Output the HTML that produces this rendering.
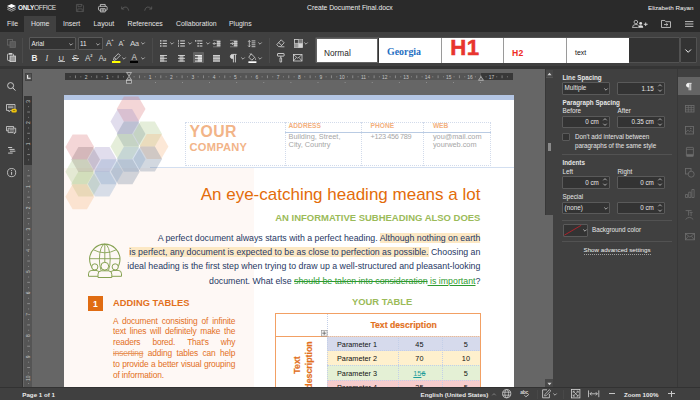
<!DOCTYPE html>
<html>
<head>
<meta charset="utf-8">
<title>Create Document Final.docx</title>
<style>
*{box-sizing:border-box;margin:0;padding:0}
html,body{width:700px;height:400px;overflow:hidden;background:#404040}
body{font-family:"Liberation Sans",sans-serif;font-size:6.3px;color:#d8d8d8;position:relative;line-height:1}
.a{position:absolute}
.t{position:absolute;white-space:nowrap;line-height:1}
svg{position:absolute;overflow:visible}
/* chrome */
#hdr{left:0;top:0;width:700px;height:31.8px;background:#2a2a2a}
#hometab{left:24.2px;top:16px;width:31.8px;height:16px;background:#404040}
.tab{font-size:6.9px;color:#e4e4e4;top:20.9px}
#tb{left:0;top:31.8px;width:700px;height:35px;background:#404040}
#tbline{left:0;top:66px;width:700px;height:3.4px;background:#353535}
.sep{width:1px;background:#4b4b4b;top:38px;height:25px}
.combo{background:#333;border:1px solid #595959;border-radius:1px}
#lsb{left:0;top:69px;width:22px;height:318px;background:#404040}
#lsbline{left:22px;top:69px;width:1px;height:318px;background:#333}
#canvas{left:23px;top:69px;width:522px;height:318px;background:#666}
#status{left:0;top:386.5px;width:700px;height:13.5px;background:#404040;border-top:1.2px solid #323232}
#rpanel{left:553px;top:69px;width:124px;height:318px;background:#404040}
#rbar{left:677px;top:69px;width:23px;height:318px;background:#404040;border-left:1px solid #383838}
#vscroll{left:545px;top:69px;width:8px;height:318px;background:#666}
.lbl{font-size:6.3px;color:#e6e6e6}
.lblb{font-size:6.3px;color:#e6e6e6;font-weight:bold}
.inp{background:#333;border:1px solid #5a5a5a;border-radius:1px;height:12.5px}
.hr{height:1px;background:#525252;left:562px;width:110px}
/* page */
#page{left:64px;top:95px;width:449.5px;height:291.5px;background:#fff;overflow:hidden}
</style>
</head>
<body>
<!-- header -->
<div class="a" id="hdr"></div>
<div class="a" id="hometab"></div>

<!-- title bar -->
<svg style="left:7px;top:4px" width="9" height="8" viewBox="0 0 9 8"><path d="M4.5 0 L9 2 L4.5 4 L0 2Z" fill="#fff"/><path d="M0.3 3.6 L4.5 5.5 L8.7 3.6" fill="none" stroke="#d0d0d0" stroke-width="0.9"/><path d="M0.3 5.3 L4.5 7.2 L8.7 5.3" fill="none" stroke="#a8a8a8" stroke-width="0.9"/></svg>
<div class="t" style="left:18px;top:4.6px;font-size:6.5px;font-weight:bold;color:#f2f2f2;letter-spacing:-0.35px">ONLY<span style="font-weight:normal;color:#e0e0e0">OFFICE</span></div>
<!-- save (dim) -->
<svg style="left:76.1px;top:3.6px" width="8" height="8" viewBox="0 0 9 9"><path d="M0.5 0.5 H6.8 L8.5 2.2 V8.5 H0.5Z M2.2 0.5 V3 H6 V0.5 M2 8.5 V5.5 H7 V8.5" fill="none" stroke="#5c5c5c" stroke-width="0.8"/></svg>
<!-- print -->
<svg style="left:98px;top:3.6px" width="9.6" height="8.4" viewBox="0 0 10 9" preserveAspectRatio="none"><path d="M2.5 2.5 V0.5 H7.5 V2.5 M2.5 6.8 H1.6 Q0.5 6.8 0.5 5.7 V3.6 Q0.5 2.5 1.6 2.5 H8.4 Q9.5 2.5 9.5 3.6 V5.7 Q9.5 6.8 8.4 6.8 H7.5 M2.5 5 H7.5 V8.5 H2.5Z M3.6 6.3 H6.4 M3.6 7.4 H6.4" fill="none" stroke="#dcdcdc" stroke-width="0.8"/></svg>
<!-- undo / redo (dim) -->
<svg style="left:121.2px;top:5.6px" width="8.4" height="5.4" viewBox="0 0 9 6"><path d="M0.6 0.6 V3.4 H3.4 M0.8 3.2 Q3 0.6 5.6 1.2 Q8 2 8.4 5.2" fill="none" stroke="#5e5e5e" stroke-width="0.9"/></svg>
<svg style="left:144px;top:5.6px" width="8.4" height="5.4" viewBox="0 0 9 6"><path d="M8.4 0.6 V3.4 H5.6 M8.2 3.2 Q6 0.6 3.4 1.2 Q1 2 0.6 5.2" fill="none" stroke="#5e5e5e" stroke-width="0.9"/></svg>
<div class="t" style="left:307px;top:4.8px;font-size:6.78px;color:#ececec">Create Document Final.docx</div>
<div class="t" style="left:648px;top:5px;font-size:6.25px;color:#f6f6f6">Elizabeth Rayan</div>
<!-- tabs -->
<div class="t tab" style="left:7px">File</div>
<div class="t tab" style="left:31px">Home</div>
<div class="t tab" style="left:63px">Insert</div>
<div class="t tab" style="left:93.5px">Layout</div>
<div class="t tab" style="left:127.5px">References</div>
<div class="t tab" style="left:176px">Collaboration</div>
<div class="t tab" style="left:229px">Plugins</div>
<!-- share / folder / menu -->
<svg style="left:632.3px;top:19.8px" width="16.4" height="8" viewBox="0 0 17 9" preserveAspectRatio="none"><circle cx="4" cy="2.3" r="1.9" fill="none" stroke="#dcdcdc" stroke-width="0.8"/><path d="M0.5 8.5 Q0.5 5 4 5 Q6 5 6.8 6.2 M0.5 8.4 H6" fill="none" stroke="#dcdcdc" stroke-width="0.8"/><circle cx="9" cy="3.8" r="1.5" fill="#dcdcdc"/><path d="M6.4 8.6 Q6.4 5.8 9 5.8 Q11.6 5.8 11.6 8.6Z" fill="#dcdcdc"/><path d="M12.2 4.8 H16.2 M14.2 2.8 V6.8" stroke="#dcdcdc" stroke-width="1"/></svg>
<svg style="left:661.2px;top:19.8px" width="10" height="8.4" viewBox="0 0 10 9" preserveAspectRatio="none"><path d="M0.5 0.5 H3.8 L4.8 1.8 H9.5 V8 H0.5Z" fill="none" stroke="#dcdcdc" stroke-width="0.8"/><path d="M3 4.9 H6.6 M5.3 3.5 L6.8 4.9 L5.3 6.3" fill="none" stroke="#dcdcdc" stroke-width="0.8"/></svg>
<svg style="left:684.5px;top:21px" width="9" height="7" viewBox="0 0 9 7"><path d="M0 0.6 H8.4 M0 3 H8.4 M0 5.4 H8.4" stroke="#d4d4d4" stroke-width="0.85"/></svg>
<div class="a" id="tb"></div>
<div class="a" id="tbline"></div>
<!-- toolbar -->
<svg style="left:7px;top:39px" width="9" height="9" viewBox="0 0 9 9"><rect x="0.5" y="0.5" width="5" height="5.6" fill="none" stroke="#666" stroke-width="0.8"/><rect x="3" y="2.6" width="5.4" height="5.8" fill="#5a5a5a" stroke="#666" stroke-width="0.8"/></svg>
<svg style="left:7px;top:53px" width="9" height="9" viewBox="0 0 9 9"><rect x="0.5" y="1" width="6" height="6.4" rx="0.6" fill="none" stroke="#d0d0d0" stroke-width="0.8"/><rect x="2" y="0" width="3" height="1.6" fill="#d0d0d0"/><rect x="3" y="3" width="5.5" height="5.6" fill="#9a9a9a" stroke="#d8d8d8" stroke-width="0.8"/></svg>
<div class="a sep" style="left:21.9px"></div>
<div class="a sep" style="left:152px"></div>
<div class="a sep" style="left:269px"></div>
<div class="a combo" style="left:29px;top:37px;width:47px;height:12.5px"></div><div class="t" style="left:31.5px;top:41.2px;font-size:6.3px;color:#ededed">Arial</div>
<svg style="left:69px;top:42.6px" width="4" height="3" viewBox="0 0 4 3"><path d="M0.3 0.5 L2 2.2 L3.7 0.5" fill="none" stroke="#c8c8c8" stroke-width="0.8"/></svg>
<div class="a combo" style="left:77.5px;top:37px;width:25px;height:12.5px"></div><div class="t" style="left:80px;top:41.2px;font-size:6.3px;color:#ededed">11</div>
<svg style="left:96.3px;top:42.6px" width="4" height="3" viewBox="0 0 4 3"><path d="M0.3 0.5 L2 2.2 L3.7 0.5" fill="none" stroke="#c8c8c8" stroke-width="0.8"/></svg>
<div class="t" style="left:106px;top:38.6px;font-size:8.4px;color:#d6d6d6">A<span style="font-size:4px;position:relative;top:-4.2px;left:-0.3px;font-weight:bold">+</span></div>
<div class="t" style="left:118.5px;top:39.8px;font-size:7.2px;color:#d6d6d6">A<span style="font-size:4.5px;position:relative;top:-3.6px;left:-0.2px;font-weight:bold">-</span></div>
<div class="t" style="left:130px;top:39.9px;font-size:8px;color:#d6d6d6;letter-spacing:-0.3px">A<span style="font-size:7.2px">a</span></div>
<svg style="left:141px;top:42px" width="4" height="3" viewBox="0 0 4 3"><path d="M0.3 0.5 L2 2.2 L3.7 0.5" fill="none" stroke="#c8c8c8" stroke-width="0.8"/></svg>
<div class="t" style="left:31.6px;top:54.7px;font-size:8.2px;font-weight:bold;color:#efefef">B</div>
<div class="t" style="left:45.5px;top:54.7px;font-size:8.2px;font-style:italic;font-family:'Liberation Serif',serif;color:#d6d6d6">I</div>
<div class="t" style="left:58.6px;top:54.8px;font-size:7.6px;color:#d6d6d6">U</div><div class="a" style="left:58.3px;top:61px;width:6.4px;height:0.7px;opacity:0.8;background:#d6d6d6"></div>
<div class="t" style="left:72.6px;top:54.7px;font-size:8.2px;color:#d6d6d6">S</div><div class="a" style="left:71.9px;top:58.2px;width:7px;height:0.7px;background:#d6d6d6"></div>
<div class="t" style="left:85px;top:54.7px;font-size:8.2px;color:#d6d6d6">A<span style="font-size:4px;position:relative;top:-4px;left:-0.2px;font-weight:bold">2</span></div>
<div class="t" style="left:98.6px;top:54.7px;font-size:8.2px;color:#d6d6d6">A<span style="font-size:4px;position:relative;top:0.8px;left:-0.2px;font-weight:bold">2</span></div>
<svg style="left:112px;top:52.5px" width="9" height="10" viewBox="0 0 9 10"><path d="M6.3 0.6 L8.2 2.5 L4.2 6.5 L2.3 4.6Z M2.3 4.6 L1.4 6.8 L2.1 7.4 L4.2 6.5" fill="none" stroke="#d6d6d6" stroke-width="0.8" stroke-linejoin="round"/><rect x="0" y="8" width="8.4" height="2" fill="#ffff00"/></svg>
<svg style="left:122.3px;top:56.6px" width="4" height="3" viewBox="0 0 4 3"><path d="M0.3 0.5 L2 2.2 L3.7 0.5" fill="none" stroke="#c8c8c8" stroke-width="0.8"/></svg>
<div class="t" style="left:131.4px;top:53.6px;font-size:8.2px;color:#d6d6d6">A</div><div class="a" style="left:130.4px;top:61px;width:7.4px;height:1.6px;background:#000"></div>
<svg style="left:141px;top:56.6px" width="4" height="3" viewBox="0 0 4 3"><path d="M0.3 0.5 L2 2.2 L3.7 0.5" fill="none" stroke="#c8c8c8" stroke-width="0.8"/></svg>


<!-- toolbar part 2 -->
<svg style="left:160.2px;top:39.7px" width="7" height="7" viewBox="0 0 7 7"><rect x="0" y="0.25" width="1.5" height="1.3" fill="#d6d6d6"/><rect x="2.6" y="0.4" width="4.300000000000001" height="1" fill="#d6d6d6"/><rect x="0" y="2.8000000000000003" width="1.5" height="1.3" fill="#d6d6d6"/><rect x="2.6" y="2.95" width="4.300000000000001" height="1" fill="#d6d6d6"/><rect x="0" y="5.35" width="1.5" height="1.3" fill="#d6d6d6"/><rect x="2.6" y="5.5" width="4.300000000000001" height="1" fill="#d6d6d6"/></svg>
<svg style="left:170px;top:42.0px" width="4" height="3" viewBox="0 0 4 3"><path d="M0.3 0.5 L2 2.2 L3.7 0.5" fill="none" stroke="#c8c8c8" stroke-width="0.8"/></svg>
<svg style="left:177.7px;top:39.7px" width="7" height="7" viewBox="0 0 7 7"><rect x="0.2" y="-0.09999999999999998" width="0.7" height="2" fill="#d6d6d6"/><rect x="2.2" y="0.4" width="4.7" height="1" fill="#d6d6d6"/><rect x="0.2" y="2.45" width="0.7" height="2" fill="#d6d6d6"/><rect x="2.2" y="2.95" width="4.7" height="1" fill="#d6d6d6"/><rect x="0.2" y="5.0" width="0.7" height="2" fill="#d6d6d6"/><rect x="2.2" y="5.5" width="4.7" height="1" fill="#d6d6d6"/></svg>
<svg style="left:188px;top:42.0px" width="4" height="3" viewBox="0 0 4 3"><path d="M0.3 0.5 L2 2.2 L3.7 0.5" fill="none" stroke="#c8c8c8" stroke-width="0.8"/></svg>
<svg style="left:195px;top:39.7px" width="7.6" height="7" viewBox="0 0 7.6 7"><rect x="0" y="0.25" width="1.4" height="1.3" fill="#d6d6d6"/><rect x="2.2" y="0.4" width="5.2" height="1" fill="#d6d6d6"/><rect x="2.4" y="2.8000000000000003" width="1.4" height="1.3" fill="#d6d6d6"/><rect x="4.6" y="2.95" width="2.8000000000000007" height="1" fill="#d6d6d6"/><rect x="2.4" y="5.35" width="1.4" height="1.3" fill="#d6d6d6"/><rect x="4.6" y="5.5" width="2.8000000000000007" height="1" fill="#d6d6d6"/></svg>
<svg style="left:205.5px;top:42.0px" width="4" height="3" viewBox="0 0 4 3"><path d="M0.3 0.5 L2 2.2 L3.7 0.5" fill="none" stroke="#c8c8c8" stroke-width="0.8"/></svg>
<svg style="left:213px;top:39.6px" width="7.4" height="7.2" viewBox="0 0 7.4 7.2"><path d="M0 0.4 H7.4 M0 6.8 H7.4" stroke="#d6d6d6" stroke-width="0.7" opacity="0.55"/><rect x="3.8" y="1" width="3.6" height="5.2" fill="#d6d6d6" opacity="0.7"/><path d="M3.8 1.4 H7.4 M3.8 3.6 H7.4 M3.8 5.8 H7.4" stroke="#d6d6d6" stroke-width="0.8"/><path d="M0.2 3.6 H3.4 M1.5 2.3 L0.2 3.6 L1.5 4.9" fill="none" stroke="#d6d6d6" stroke-width="0.8"/></svg>
<svg style="left:230px;top:39.6px" width="7.4" height="7.2" viewBox="0 0 7.4 7.2"><path d="M0 0.4 H7.4 M0 6.8 H7.4" stroke="#d6d6d6" stroke-width="0.7" opacity="0.55"/><rect x="3.8" y="1" width="3.6" height="5.2" fill="#d6d6d6" opacity="0.7"/><path d="M3.8 1.4 H7.4 M3.8 3.6 H7.4 M3.8 5.8 H7.4" stroke="#d6d6d6" stroke-width="0.8"/><path d="M0.2 3.6 H3.4 M2.1 2.3 L3.4 3.6 L2.1 4.9" fill="none" stroke="#d6d6d6" stroke-width="0.8"/></svg>
<svg style="left:248px;top:39.5px" width="7.6" height="7.4" viewBox="0 0 7.6 7.4"><path d="M1.3 0.6 V6.8 M0.1 1.8 L1.3 0.5 L2.5 1.8 M0.1 5.6 L1.3 6.9 L2.5 5.6" fill="none" stroke="#d6d6d6" stroke-width="0.75"/><path d="M3.6 0.9 H7.4 M3.6 2.85 H7.4 M3.6 4.8 H7.4 M3.6 6.7 H7.4" stroke="#d6d6d6" stroke-width="0.85"/></svg>
<svg style="left:258px;top:42.0px" width="4" height="3" viewBox="0 0 4 3"><path d="M0.3 0.5 L2 2.2 L3.7 0.5" fill="none" stroke="#c8c8c8" stroke-width="0.8"/></svg>
<svg style="left:160.1px;top:54.5px" width="7" height="6.6" viewBox="0 0 7 6.6"><rect x="0" y="0" width="4.2" height="6.6" fill="#d6d6d6" opacity="0.6"/><path d="M0 0.5 H7 M0 3.3 H7 M0 6.1 H7" stroke="#d6d6d6" stroke-width="0.9"/></svg>
<svg style="left:177.9px;top:54.5px" width="7" height="6.6" viewBox="0 0 7 6.6"><rect x="1.5" y="0" width="4.0" height="6.6" fill="#d6d6d6" opacity="0.6"/><path d="M0 0.5 H7 M0 3.3 H7 M0 6.1 H7" stroke="#d6d6d6" stroke-width="0.9"/></svg>
<div class="a" style="left:193.2px;top:52.3px;width:10.6px;height:10.4px;background:#636363;border-radius:1px"></div>
<svg style="left:195.3px;top:54.5px" width="7" height="6.6" viewBox="0 0 7 6.6"><rect x="2.8" y="0" width="4.2" height="6.6" fill="#f2f2f2" opacity="0.65"/><path d="M0 0.5 H7 M0 3.3 H7 M0 6.1 H7" stroke="#f2f2f2" stroke-width="0.9"/></svg>
<svg style="left:213px;top:54.5px" width="7" height="6.6" viewBox="0 0 7 6.6"><rect x="0" y="0" width="7" height="6.6" fill="#d6d6d6" opacity="0.62"/><path d="M0 0.5 H7 M0 3.3 H7 M0 6.1 H7" stroke="#d6d6d6" stroke-width="0.9"/></svg>
<svg style="left:230px;top:53.5px" width="7" height="8.5" viewBox="0 0 7 8.5"><path d="M3.4 4.6 H2.6 Q0.4 4.6 0.4 2.5 Q0.4 0.4 2.6 0.4 H6.6 M3.4 0.4 V8.4 M5.4 0.4 V8.4" fill="none" stroke="#d6d6d6" stroke-width="0.9"/><path d="M3.4 0.4 H2.6 Q0.4 0.4 0.4 2.5 Q0.4 4.6 2.6 4.6 H3.4Z" fill="#d6d6d6"/></svg>
<svg style="left:240.5px;top:56.6px" width="4" height="3" viewBox="0 0 4 3"><path d="M0.3 0.5 L2 2.2 L3.7 0.5" fill="none" stroke="#c8c8c8" stroke-width="0.8"/></svg>
<svg style="left:247.5px;top:52.5px" width="9" height="10" viewBox="0 0 9 10"><path d="M3.2 0.8 L6.8 4.4 L3.8 7.2 L0.8 4.2 Z M2 0.4 L3.6 2" fill="none" stroke="#d6d6d6" stroke-width="0.8" stroke-linejoin="round"/><path d="M7.6 5 Q8.6 6.4 7.6 7 Q6.6 6.4 7.6 5Z" fill="#d6d6d6"/><rect x="0.4" y="8.3" width="8" height="1.7" fill="#fff"/></svg>
<svg style="left:258px;top:56.6px" width="4" height="3" viewBox="0 0 4 3"><path d="M0.3 0.5 L2 2.2 L3.7 0.5" fill="none" stroke="#c8c8c8" stroke-width="0.8"/></svg>
<svg style="left:276px;top:39px" width="9" height="9" viewBox="0 0 9 9"><path d="M5.2 0.8 L8.2 3.8 L4.4 7.6 H2.6 L0.8 5.6 Z M2.6 3.4 L5.6 6.4 M4.4 7.8 H8.4" fill="none" stroke="#d6d6d6" stroke-width="0.8" stroke-linejoin="round"/></svg>
<svg style="left:293.5px;top:39px" width="9" height="9" viewBox="0 0 9 9"><rect x="0.4" y="0.4" width="8" height="8" fill="none" stroke="#d6d6d6" stroke-width="0.8"/><rect x="4.4" y="0.4" width="4" height="4" fill="#7a7a7a"/><rect x="0.4" y="4.4" width="4" height="4" fill="#9a9a9a"/><rect x="4.4" y="4.4" width="4" height="4" fill="#d6d6d6"/><path d="M4.4 0.4 V8.4 M0.4 4.4 H8.4" stroke="#d6d6d6" stroke-width="0.6"/></svg>
<svg style="left:304.3px;top:42.0px" width="4" height="3" viewBox="0 0 4 3"><path d="M0.3 0.5 L2 2.2 L3.7 0.5" fill="none" stroke="#c8c8c8" stroke-width="0.8"/></svg>
<svg style="left:277px;top:53px" width="8" height="9.5" viewBox="0 0 8 9.5"><rect x="0.5" y="0.5" width="6.6" height="2.6" rx="0.4" fill="none" stroke="#d6d6d6" stroke-width="0.9"/><path d="M3.8 3.2 V5 M3 5 H4.6 V9 H3Z" fill="none" stroke="#d6d6d6" stroke-width="0.8"/></svg>
<svg style="left:293px;top:54px" width="9.5" height="7.5" viewBox="0 0 9.5 7.5"><rect x="0.4" y="0.4" width="8.6" height="6.6" fill="none" stroke="#d6d6d6" stroke-width="0.8"/><path d="M0.6 0.8 L4.7 4.2 L8.8 0.8 M0.6 6.8 L3.4 3.4 M8.8 6.8 L6 3.4" fill="none" stroke="#d6d6d6" stroke-width="0.7"/></svg>
<!-- style gallery -->
<div class="a" style="left:315px;top:37px;width:365px;height:26px;background:#333;border:1px solid #525252;border-radius:1px"></div>
<div class="a" style="left:315.9px;top:37.7px;width:62.4px;height:25.1px;background:#fff;border:1.4px solid #646464"></div>
<div class="a" style="left:379px;top:38px;width:250px;height:24.5px;background:#fff"></div>
<div class="a" style="left:441px;top:38px;width:1px;height:24.5px;background:#9a9a9a"></div>
<div class="a" style="left:503.3px;top:38px;width:1px;height:24.5px;background:#9a9a9a"></div>
<div class="a" style="left:566.3px;top:38px;width:1px;height:24.5px;background:#9a9a9a"></div>
<div class="t" style="left:324px;top:48.6px;font-size:8.3px;color:#262626">Normal</div>
<div class="t" style="left:387px;top:47.3px;font-size:9.9px;font-weight:bold;font-family:'Liberation Serif',serif;color:#1f6fc2">Georgia</div>
<div class="t" style="left:450.3px;top:37.2px;font-size:22.2px;letter-spacing:0.5px;font-weight:bold;color:#e8352e;-webkit-text-stroke:0.5px #e8352e">H1</div>
<div class="t" style="left:512px;top:48.6px;font-size:8.6px;letter-spacing:0.4px;font-weight:bold;color:#ee2a24">H2</div>
<div class="t" style="left:575px;top:49.6px;font-size:6.9px;color:#111">text</div>
<div class="a" style="left:680px;top:37px;width:16.5px;height:26px;background:#333;border:1px solid #525252;border-radius:1px"></div>
<svg style="left:685px;top:48.5px" width="6.4" height="4" viewBox="0 0 6.4 4"><path d="M0.4 0.5 L3.2 3.3 L6 0.5" fill="none" stroke="#f0f0f0" stroke-width="1"/></svg>
<div class="a" id="lsb"></div>
<div class="a" id="lsbline"></div>
<div class="a" id="canvas"></div>

<!-- left sidebar icons -->
<svg style="left:6.5px;top:82px" width="9" height="9.5" viewBox="0 0 9 9.5"><circle cx="3.6" cy="3.6" r="3" fill="none" stroke="#d6d6d6" stroke-width="0.9"/><path d="M5.8 5.8 L8.4 8.6" stroke="#d6d6d6" stroke-width="1"/></svg>
<svg style="left:6.3px;top:103.6px" width="11" height="9.4" viewBox="0 0 11 9.4"><path d="M0.5 0.5 H9 V6.4 H4.4 L3 7.9 V6.4 H0.5Z" fill="none" stroke="#d6d6d6" stroke-width="0.8" stroke-linejoin="round"/><path d="M2 2.2 H7.5 M2 3.7 H7.5" stroke="#d6d6d6" stroke-width="0.7"/><rect x="5.4" y="4.7" width="5.4" height="3.8" rx="1.6" fill="#f3c70d"/><path d="M6.9 6.6 H9.3" stroke="#6e5a00" stroke-width="0.7"/></svg>
<svg style="left:6.4px;top:125.8px" width="10.2" height="8.4" viewBox="0 0 10.2 8.4"><path d="M0.5 0.5 H7.6 V4.8 H0.5Z" fill="none" stroke="#d6d6d6" stroke-width="0.8"/><path d="M2.2 2.2 H9.7 V6.6 H8.6 V7.9 L7.3 6.6 H2.2Z" fill="#404040" stroke="#d6d6d6" stroke-width="0.8" stroke-linejoin="round"/><path d="M3.5 3.7 H8.4 M3.5 5.1 H8.4" stroke="#d6d6d6" stroke-width="0.6"/></svg>
<svg style="left:7px;top:147.3px" width="9" height="7" viewBox="0 0 9 7"><path d="M1.1 0.5 H5.2 M2.4 2.4 H7.6 M3 4.2 H8.4 M1.1 6.1 H5.7" stroke="#d6d6d6" stroke-width="0.9"/></svg>
<svg style="left:6.5px;top:168px" width="9.5" height="9.5" viewBox="0 0 9.5 9.5"><circle cx="4.6" cy="4.6" r="4.1" fill="none" stroke="#d6d6d6" stroke-width="0.8"/><path d="M4.6 4 V6.9" stroke="#d6d6d6" stroke-width="0.9"/><circle cx="4.6" cy="2.6" r="0.55" fill="#d6d6d6"/></svg>
<!-- rulers -->
<div class="a" style="left:24.5px;top:73px;width:7.5px;height:8px;background:#555;border:0.5px solid #444"></div>
<svg style="left:26.5px;top:75px" width="4" height="4" viewBox="0 0 4 4"><path d="M0.6 0 V3.2 H3.6" fill="none" stroke="#f4f4f4" stroke-width="1.1"/></svg>
<div class="a" style="left:65px;top:73px;width:447.8px;height:7.4px;background:#555"></div>
<div class="a" style="left:65px;top:73px;width:63.8px;height:7.4px;background:#383838"></div>
<div class="a" style="left:481px;top:73px;width:31.8px;height:7.4px;background:#383838"></div>
<svg style="left:65px;top:73px" width="447.5" height="8" viewBox="0 0 447.5 8"><path d="M5.14 3.3 V4.3" stroke="#b0b0b0" stroke-width="0.6"/><path d="M10.48 2.4 V5.2" stroke="#b0b0b0" stroke-width="0.6"/><path d="M15.81 3.3 V4.3" stroke="#b0b0b0" stroke-width="0.6"/><text x="21.14" y="5.7" font-size="4.9" fill="#c6c6c6" text-anchor="middle" font-family="Liberation Sans, sans-serif">2</text><path d="M26.47 3.3 V4.3" stroke="#b0b0b0" stroke-width="0.6"/><path d="M31.81 2.4 V5.2" stroke="#b0b0b0" stroke-width="0.6"/><path d="M37.14 3.3 V4.3" stroke="#b0b0b0" stroke-width="0.6"/><text x="42.47" y="5.7" font-size="4.9" fill="#c6c6c6" text-anchor="middle" font-family="Liberation Sans, sans-serif">1</text><path d="M47.80 3.3 V4.3" stroke="#b0b0b0" stroke-width="0.6"/><path d="M53.14 2.4 V5.2" stroke="#b0b0b0" stroke-width="0.6"/><path d="M58.47 3.3 V4.3" stroke="#b0b0b0" stroke-width="0.6"/><path d="M69.13 3.3 V4.3" stroke="#b0b0b0" stroke-width="0.6"/><path d="M74.47 2.4 V5.2" stroke="#b0b0b0" stroke-width="0.6"/><path d="M79.80 3.3 V4.3" stroke="#b0b0b0" stroke-width="0.6"/><text x="85.13" y="5.7" font-size="4.9" fill="#c6c6c6" text-anchor="middle" font-family="Liberation Sans, sans-serif">1</text><path d="M90.46 3.3 V4.3" stroke="#b0b0b0" stroke-width="0.6"/><path d="M95.80 2.4 V5.2" stroke="#b0b0b0" stroke-width="0.6"/><path d="M101.13 3.3 V4.3" stroke="#b0b0b0" stroke-width="0.6"/><text x="106.46" y="5.7" font-size="4.9" fill="#c6c6c6" text-anchor="middle" font-family="Liberation Sans, sans-serif">2</text><path d="M111.79 3.3 V4.3" stroke="#b0b0b0" stroke-width="0.6"/><path d="M117.12 2.4 V5.2" stroke="#b0b0b0" stroke-width="0.6"/><path d="M122.46 3.3 V4.3" stroke="#b0b0b0" stroke-width="0.6"/><text x="127.79" y="5.7" font-size="4.9" fill="#c6c6c6" text-anchor="middle" font-family="Liberation Sans, sans-serif">3</text><path d="M133.12 3.3 V4.3" stroke="#b0b0b0" stroke-width="0.6"/><path d="M138.46 2.4 V5.2" stroke="#b0b0b0" stroke-width="0.6"/><path d="M143.79 3.3 V4.3" stroke="#b0b0b0" stroke-width="0.6"/><text x="149.12" y="5.7" font-size="4.9" fill="#c6c6c6" text-anchor="middle" font-family="Liberation Sans, sans-serif">4</text><path d="M154.45 3.3 V4.3" stroke="#b0b0b0" stroke-width="0.6"/><path d="M159.78 2.4 V5.2" stroke="#b0b0b0" stroke-width="0.6"/><path d="M165.12 3.3 V4.3" stroke="#b0b0b0" stroke-width="0.6"/><text x="170.45" y="5.7" font-size="4.9" fill="#c6c6c6" text-anchor="middle" font-family="Liberation Sans, sans-serif">5</text><path d="M175.78 3.3 V4.3" stroke="#b0b0b0" stroke-width="0.6"/><path d="M181.12 2.4 V5.2" stroke="#b0b0b0" stroke-width="0.6"/><path d="M186.45 3.3 V4.3" stroke="#b0b0b0" stroke-width="0.6"/><text x="191.78" y="5.7" font-size="4.9" fill="#c6c6c6" text-anchor="middle" font-family="Liberation Sans, sans-serif">6</text><path d="M197.11 3.3 V4.3" stroke="#b0b0b0" stroke-width="0.6"/><path d="M202.44 2.4 V5.2" stroke="#b0b0b0" stroke-width="0.6"/><path d="M207.78 3.3 V4.3" stroke="#b0b0b0" stroke-width="0.6"/><text x="213.11" y="5.7" font-size="4.9" fill="#c6c6c6" text-anchor="middle" font-family="Liberation Sans, sans-serif">7</text><path d="M218.44 3.3 V4.3" stroke="#b0b0b0" stroke-width="0.6"/><path d="M223.77 2.4 V5.2" stroke="#b0b0b0" stroke-width="0.6"/><path d="M229.11 3.3 V4.3" stroke="#b0b0b0" stroke-width="0.6"/><text x="234.44" y="5.7" font-size="4.9" fill="#c6c6c6" text-anchor="middle" font-family="Liberation Sans, sans-serif">8</text><path d="M239.77 3.3 V4.3" stroke="#b0b0b0" stroke-width="0.6"/><path d="M245.11 2.4 V5.2" stroke="#b0b0b0" stroke-width="0.6"/><path d="M250.44 3.3 V4.3" stroke="#b0b0b0" stroke-width="0.6"/><text x="255.77" y="5.7" font-size="4.9" fill="#c6c6c6" text-anchor="middle" font-family="Liberation Sans, sans-serif">9</text><path d="M261.10 3.3 V4.3" stroke="#b0b0b0" stroke-width="0.6"/><path d="M266.44 2.4 V5.2" stroke="#b0b0b0" stroke-width="0.6"/><path d="M271.77 3.3 V4.3" stroke="#b0b0b0" stroke-width="0.6"/><text x="277.10" y="5.7" font-size="4.9" fill="#c6c6c6" text-anchor="middle" font-family="Liberation Sans, sans-serif">10</text><path d="M282.43 3.3 V4.3" stroke="#b0b0b0" stroke-width="0.6"/><path d="M287.76 2.4 V5.2" stroke="#b0b0b0" stroke-width="0.6"/><path d="M293.10 3.3 V4.3" stroke="#b0b0b0" stroke-width="0.6"/><text x="298.43" y="5.7" font-size="4.9" fill="#c6c6c6" text-anchor="middle" font-family="Liberation Sans, sans-serif">11</text><path d="M303.76 3.3 V4.3" stroke="#b0b0b0" stroke-width="0.6"/><path d="M309.10 2.4 V5.2" stroke="#b0b0b0" stroke-width="0.6"/><path d="M314.43 3.3 V4.3" stroke="#b0b0b0" stroke-width="0.6"/><text x="319.76" y="5.7" font-size="4.9" fill="#c6c6c6" text-anchor="middle" font-family="Liberation Sans, sans-serif">12</text><path d="M325.09 3.3 V4.3" stroke="#b0b0b0" stroke-width="0.6"/><path d="M330.43 2.4 V5.2" stroke="#b0b0b0" stroke-width="0.6"/><path d="M335.76 3.3 V4.3" stroke="#b0b0b0" stroke-width="0.6"/><text x="341.09" y="5.7" font-size="4.9" fill="#c6c6c6" text-anchor="middle" font-family="Liberation Sans, sans-serif">13</text><path d="M346.42 3.3 V4.3" stroke="#b0b0b0" stroke-width="0.6"/><path d="M351.75 2.4 V5.2" stroke="#b0b0b0" stroke-width="0.6"/><path d="M357.09 3.3 V4.3" stroke="#b0b0b0" stroke-width="0.6"/><text x="362.42" y="5.7" font-size="4.9" fill="#c6c6c6" text-anchor="middle" font-family="Liberation Sans, sans-serif">14</text><path d="M367.75 3.3 V4.3" stroke="#b0b0b0" stroke-width="0.6"/><path d="M373.08 2.4 V5.2" stroke="#b0b0b0" stroke-width="0.6"/><path d="M378.42 3.3 V4.3" stroke="#b0b0b0" stroke-width="0.6"/><text x="383.75" y="5.7" font-size="4.9" fill="#c6c6c6" text-anchor="middle" font-family="Liberation Sans, sans-serif">15</text><path d="M389.08 3.3 V4.3" stroke="#b0b0b0" stroke-width="0.6"/><path d="M394.41 2.4 V5.2" stroke="#b0b0b0" stroke-width="0.6"/><path d="M399.75 3.3 V4.3" stroke="#b0b0b0" stroke-width="0.6"/><text x="405.08" y="5.7" font-size="4.9" fill="#c6c6c6" text-anchor="middle" font-family="Liberation Sans, sans-serif">16</text><path d="M410.41 3.3 V4.3" stroke="#b0b0b0" stroke-width="0.6"/><path d="M415.75 2.4 V5.2" stroke="#b0b0b0" stroke-width="0.6"/><path d="M421.08 3.3 V4.3" stroke="#b0b0b0" stroke-width="0.6"/><text x="426.41" y="5.7" font-size="4.9" fill="#c6c6c6" text-anchor="middle" font-family="Liberation Sans, sans-serif">17</text><path d="M431.74 3.3 V4.3" stroke="#b0b0b0" stroke-width="0.6"/><path d="M437.07 2.4 V5.2" stroke="#b0b0b0" stroke-width="0.6"/><path d="M442.41 3.3 V4.3" stroke="#b0b0b0" stroke-width="0.6"/></svg>
<svg style="left:65px;top:82px" width="447.5" height="1"><rect x="90.0" y="0" width="0.8" height="1" fill="#9a9a9a"/><rect x="117.1" y="0" width="0.8" height="1" fill="#9a9a9a"/><rect x="144.2" y="0" width="0.8" height="1" fill="#9a9a9a"/><rect x="171.3" y="0" width="0.8" height="1" fill="#9a9a9a"/><rect x="198.4" y="0" width="0.8" height="1" fill="#9a9a9a"/><rect x="225.5" y="0" width="0.8" height="1" fill="#9a9a9a"/><rect x="252.6" y="0" width="0.8" height="1" fill="#9a9a9a"/><rect x="279.7" y="0" width="0.8" height="1" fill="#9a9a9a"/><rect x="306.8" y="0" width="0.8" height="1" fill="#9a9a9a"/><rect x="333.9" y="0" width="0.8" height="1" fill="#9a9a9a"/><rect x="361.0" y="0" width="0.8" height="1" fill="#9a9a9a"/><rect x="388.1" y="0" width="0.8" height="1" fill="#9a9a9a"/><rect x="415.2" y="0" width="0.8" height="1" fill="#9a9a9a"/></svg>
<svg style="left:126.2px;top:71.5px" width="6" height="12" viewBox="0 0 6 12"><path d="M0.5 0.5 H5.5 L3 4 Z M0.5 7.8 L3 4.3 L5.5 7.8 Z" fill="#555" stroke="#cfcfcf" stroke-width="0.7"/><rect x="0.5" y="8.6" width="5" height="2.6" fill="#555" stroke="#cfcfcf" stroke-width="0.7"/></svg>
<svg style="left:478.3px;top:76px" width="6" height="5" viewBox="0 0 6 5"><path d="M0.5 4.3 L3 0.6 L5.5 4.3 Z" fill="#555" stroke="#cfcfcf" stroke-width="0.7"/></svg>
<div class="a" style="left:24.4px;top:95.5px;width:7.2px;height:291px;background:#555"></div>
<div class="a" style="left:24.4px;top:95.5px;width:7.2px;height:69.3px;background:#383838"></div>
<svg style="left:24.5px;top:95.5px" width="7.2" height="291" viewBox="0 0 7.2 291"><text transform="translate(5.5 5.11) rotate(-90)" font-size="4.9" fill="#c6c6c6" text-anchor="middle" font-family="Liberation Sans, sans-serif">3</text><path d="M3.1 10.44 H4.1" stroke="#b0b0b0" stroke-width="0.6"/><path d="M2.2 15.78 H5" stroke="#b0b0b0" stroke-width="0.6"/><path d="M3.1 21.11 H4.1" stroke="#b0b0b0" stroke-width="0.6"/><text transform="translate(5.5 26.44) rotate(-90)" font-size="4.9" fill="#c6c6c6" text-anchor="middle" font-family="Liberation Sans, sans-serif">2</text><path d="M3.1 31.77 H4.1" stroke="#b0b0b0" stroke-width="0.6"/><path d="M2.2 37.10 H5" stroke="#b0b0b0" stroke-width="0.6"/><path d="M3.1 42.44 H4.1" stroke="#b0b0b0" stroke-width="0.6"/><text transform="translate(5.5 47.77) rotate(-90)" font-size="4.9" fill="#c6c6c6" text-anchor="middle" font-family="Liberation Sans, sans-serif">1</text><path d="M3.1 53.10 H4.1" stroke="#b0b0b0" stroke-width="0.6"/><path d="M2.2 58.44 H5" stroke="#b0b0b0" stroke-width="0.6"/><path d="M3.1 63.77 H4.1" stroke="#b0b0b0" stroke-width="0.6"/><path d="M3.1 74.43 H4.1" stroke="#b0b0b0" stroke-width="0.6"/><path d="M2.2 79.76 H5" stroke="#b0b0b0" stroke-width="0.6"/><path d="M3.1 85.10 H4.1" stroke="#b0b0b0" stroke-width="0.6"/><text transform="translate(5.5 90.43) rotate(-90)" font-size="4.9" fill="#c6c6c6" text-anchor="middle" font-family="Liberation Sans, sans-serif">1</text><path d="M3.1 95.76 H4.1" stroke="#b0b0b0" stroke-width="0.6"/><path d="M2.2 101.09 H5" stroke="#b0b0b0" stroke-width="0.6"/><path d="M3.1 106.43 H4.1" stroke="#b0b0b0" stroke-width="0.6"/><text transform="translate(5.5 111.76) rotate(-90)" font-size="4.9" fill="#c6c6c6" text-anchor="middle" font-family="Liberation Sans, sans-serif">2</text><path d="M3.1 117.09 H4.1" stroke="#b0b0b0" stroke-width="0.6"/><path d="M2.2 122.42 H5" stroke="#b0b0b0" stroke-width="0.6"/><path d="M3.1 127.76 H4.1" stroke="#b0b0b0" stroke-width="0.6"/><text transform="translate(5.5 133.09) rotate(-90)" font-size="4.9" fill="#c6c6c6" text-anchor="middle" font-family="Liberation Sans, sans-serif">3</text><path d="M3.1 138.42 H4.1" stroke="#b0b0b0" stroke-width="0.6"/><path d="M2.2 143.75 H5" stroke="#b0b0b0" stroke-width="0.6"/><path d="M3.1 149.09 H4.1" stroke="#b0b0b0" stroke-width="0.6"/><text transform="translate(5.5 154.42) rotate(-90)" font-size="4.9" fill="#c6c6c6" text-anchor="middle" font-family="Liberation Sans, sans-serif">4</text><path d="M3.1 159.75 H4.1" stroke="#b0b0b0" stroke-width="0.6"/><path d="M2.2 165.08 H5" stroke="#b0b0b0" stroke-width="0.6"/><path d="M3.1 170.42 H4.1" stroke="#b0b0b0" stroke-width="0.6"/><text transform="translate(5.5 175.75) rotate(-90)" font-size="4.9" fill="#c6c6c6" text-anchor="middle" font-family="Liberation Sans, sans-serif">5</text><path d="M3.1 181.08 H4.1" stroke="#b0b0b0" stroke-width="0.6"/><path d="M2.2 186.41 H5" stroke="#b0b0b0" stroke-width="0.6"/><path d="M3.1 191.75 H4.1" stroke="#b0b0b0" stroke-width="0.6"/><text transform="translate(5.5 197.08) rotate(-90)" font-size="4.9" fill="#c6c6c6" text-anchor="middle" font-family="Liberation Sans, sans-serif">6</text><path d="M3.1 202.41 H4.1" stroke="#b0b0b0" stroke-width="0.6"/><path d="M2.2 207.75 H5" stroke="#b0b0b0" stroke-width="0.6"/><path d="M3.1 213.08 H4.1" stroke="#b0b0b0" stroke-width="0.6"/><text transform="translate(5.5 218.41) rotate(-90)" font-size="4.9" fill="#c6c6c6" text-anchor="middle" font-family="Liberation Sans, sans-serif">7</text><path d="M3.1 223.74 H4.1" stroke="#b0b0b0" stroke-width="0.6"/><path d="M2.2 229.07 H5" stroke="#b0b0b0" stroke-width="0.6"/><path d="M3.1 234.41 H4.1" stroke="#b0b0b0" stroke-width="0.6"/><text transform="translate(5.5 239.74) rotate(-90)" font-size="4.9" fill="#c6c6c6" text-anchor="middle" font-family="Liberation Sans, sans-serif">8</text><path d="M3.1 245.07 H4.1" stroke="#b0b0b0" stroke-width="0.6"/><path d="M2.2 250.40 H5" stroke="#b0b0b0" stroke-width="0.6"/><path d="M3.1 255.74 H4.1" stroke="#b0b0b0" stroke-width="0.6"/><text transform="translate(5.5 261.07) rotate(-90)" font-size="4.9" fill="#c6c6c6" text-anchor="middle" font-family="Liberation Sans, sans-serif">9</text><path d="M3.1 266.40 H4.1" stroke="#b0b0b0" stroke-width="0.6"/><path d="M2.2 271.74 H5" stroke="#b0b0b0" stroke-width="0.6"/><path d="M3.1 277.07 H4.1" stroke="#b0b0b0" stroke-width="0.6"/><text transform="translate(5.5 282.40) rotate(-90)" font-size="4.9" fill="#c6c6c6" text-anchor="middle" font-family="Liberation Sans, sans-serif">10</text><path d="M3.1 287.73 H4.1" stroke="#b0b0b0" stroke-width="0.6"/></svg>
<div class="a" id="vscroll"></div>
<div class="a" id="rpanel"></div>
<div class="a" id="rbar"></div>
<div class="a" id="status"></div>

<!-- right panel -->
<div class="a" style="left:545px;top:69px;width:8px;height:146px;background:#404040;border-left:1px solid #383838"></div>
<div class="a" style="left:545.5px;top:69.5px;width:7.5px;height:8px;background:#484848;border-bottom:1px solid #555"></div>
<svg style="left:547px;top:71.5px" width="5" height="4" viewBox="0 0 5 4"><path d="M0.4 3.2 L2.5 0.8 L4.6 3.2Z" fill="#d0d0d0"/></svg>
<div class="a" style="left:547.5px;top:143px;width:3px;height:8px;background:#8a8a8a"></div>
<div class="a" style="left:545px;top:379px;width:8px;height:8px;background:#484848"></div>
<svg style="left:547px;top:381.5px" width="5" height="4" viewBox="0 0 5 4"><path d="M0.4 0.8 L2.5 3.2 L4.6 0.8Z" fill="#d0d0d0"/></svg>
<div class="t lblb" style="left:562.5px;top:74.6px">Line Spacing</div>
<div class="a inp" style="left:562.3px;top:82.1px;width:47.4px"></div><div class="t lbl" style="left:564.6px;top:85.3px">Multiple</div><svg style="left:603.5px;top:87.5px" width="4" height="3" viewBox="0 0 4 3"><path d="M0.3 0.5 L2 2.2 L3.7 0.5" fill="none" stroke="#c8c8c8" stroke-width="0.8"/></svg>
<div class="a inp" style="left:617.3px;top:82.1px;width:47.4px"></div><div class="t lbl" style="left:617.5px;top:85.7px;width:36.3px;text-align:right">1.15</div><svg style="left:658.0px;top:84.2px" width="4" height="8" viewBox="0 0 4 8"><path d="M0.3 2.3 L2 0.6 L3.7 2.3 M0.3 5.7 L2 7.4 L3.7 5.7" fill="none" stroke="#c8c8c8" stroke-width="0.8"/></svg>
<div class="t lblb" style="left:562.5px;top:100px">Paragraph Spacing</div>
<div class="t lbl" style="left:562.5px;top:108px">Before</div><div class="t lbl" style="left:617.5px;top:108px">After</div>
<div class="a inp" style="left:562.3px;top:115.6px;width:47.4px"></div><div class="t lbl" style="left:562.5px;top:119.2px;width:36.3px;text-align:right">0 cm</div><svg style="left:603.0px;top:117.7px" width="4" height="8" viewBox="0 0 4 8"><path d="M0.3 2.3 L2 0.6 L3.7 2.3 M0.3 5.7 L2 7.4 L3.7 5.7" fill="none" stroke="#c8c8c8" stroke-width="0.8"/></svg>
<div class="a inp" style="left:617.3px;top:115.6px;width:47.4px"></div><div class="t lbl" style="left:617.5px;top:119.2px;width:36.3px;text-align:right">0.35 cm</div><svg style="left:658.0px;top:117.7px" width="4" height="8" viewBox="0 0 4 8"><path d="M0.3 2.3 L2 0.6 L3.7 2.3 M0.3 5.7 L2 7.4 L3.7 5.7" fill="none" stroke="#c8c8c8" stroke-width="0.8"/></svg>
<div class="a inp" style="left:562.4px;top:133.2px;width:7.9px;height:7.9px"></div>
<div class="t lbl" style="left:575px;top:134px">Don't add interval between</div><div class="t lbl" style="left:575px;top:143px">paragraphs of the same style</div>
<div class="a hr" style="top:154px"></div>
<div class="t lblb" style="left:562.5px;top:160.4px">Indents</div>
<div class="t lbl" style="left:562.5px;top:168.5px">Left</div><div class="t lbl" style="left:617.5px;top:168.5px">Right</div>
<div class="a inp" style="left:562.3px;top:176.1px;width:47.4px"></div><div class="t lbl" style="left:562.5px;top:179.7px;width:36.3px;text-align:right">0 cm</div><svg style="left:603.0px;top:178.2px" width="4" height="8" viewBox="0 0 4 8"><path d="M0.3 2.3 L2 0.6 L3.7 2.3 M0.3 5.7 L2 7.4 L3.7 5.7" fill="none" stroke="#c8c8c8" stroke-width="0.8"/></svg>
<div class="a inp" style="left:617.3px;top:176.1px;width:47.4px"></div><div class="t lbl" style="left:617.5px;top:179.7px;width:36.3px;text-align:right">0 cm</div><svg style="left:658.0px;top:178.2px" width="4" height="8" viewBox="0 0 4 8"><path d="M0.3 2.3 L2 0.6 L3.7 2.3 M0.3 5.7 L2 7.4 L3.7 5.7" fill="none" stroke="#c8c8c8" stroke-width="0.8"/></svg>
<div class="t lbl" style="left:562.5px;top:194px">Special</div>
<div class="a inp" style="left:562.3px;top:201.6px;width:47.4px"></div><div class="t lbl" style="left:564.6px;top:204.9px">(none)</div><svg style="left:603.5px;top:207px" width="4" height="3" viewBox="0 0 4 3"><path d="M0.3 0.5 L2 2.2 L3.7 0.5" fill="none" stroke="#c8c8c8" stroke-width="0.8"/></svg>
<div class="a inp" style="left:617.3px;top:201.6px;width:47.4px"></div><div class="t lbl" style="left:617.5px;top:205.2px;width:36.3px;text-align:right">0 cm</div><svg style="left:658.0px;top:203.7px" width="4" height="8" viewBox="0 0 4 8"><path d="M0.3 2.3 L2 0.6 L3.7 2.3 M0.3 5.7 L2 7.4 L3.7 5.7" fill="none" stroke="#c8c8c8" stroke-width="0.8"/></svg>
<div class="a hr" style="top:219.5px"></div>
<div class="a inp" style="left:562.5px;top:224px;width:25.5px;height:12.5px"></div>
<svg style="left:563.5px;top:225px" width="17.5" height="10.5" viewBox="0 0 17.5 10.5"><path d="M0.3 10.2 L17.2 0.3" stroke="#c8202a" stroke-width="0.8"/></svg>
<svg style="left:582.5px;top:229px" width="4" height="3" viewBox="0 0 4 3"><path d="M0.3 0.5 L2 2.2 L3.7 0.5" fill="none" stroke="#c8c8c8" stroke-width="0.8"/></svg>
<div class="t lbl" style="left:592px;top:226.5px">Background color</div>
<div class="a hr" style="top:241px"></div>
<div class="t lbl" style="left:583.5px;top:246.7px;border-bottom:0.5px dotted #a0a0a0;padding-bottom:1px;font-size:6.2px;color:#f2f2f2">Show advanced settings</div>
<div class="a" style="left:678.2px;top:77.4px;width:22px;height:17.4px;background:#646464"></div>
<svg style="left:685.8px;top:82.7px" width="6" height="7.6" viewBox="0 0 6.5 8.5"><path d="M3.4 4.6 H2.6 Q0.4 4.6 0.4 2.5 Q0.4 0.4 2.6 0.4 H6.2 M3.4 0.4 V8.2 M5.2 0.4 V8.2" fill="none" stroke="#f4f4f4" stroke-width="0.9"/><path d="M3.4 0.4 H2.6 Q0.4 0.4 0.4 2.5 Q0.4 4.6 2.6 4.6 H3.4Z" fill="#f4f4f4"/></svg>
<svg style="left:684.5px;top:105px" width="9.5" height="7.5" viewBox="0 0 9.5 7.5"><rect x="0.4" y="0.4" width="8.6" height="6.6" fill="none" stroke="#6e6e6e" stroke-width="0.8"/><path d="M0.4 2.6 H9 M0.4 4.8 H9 M3.3 0.4 V7 M6.2 0.4 V7" stroke="#6e6e6e" stroke-width="0.7"/></svg>
<svg style="left:685px;top:126px" width="9" height="8.5" viewBox="0 0 9 8.5"><rect x="0.4" y="0.4" width="8" height="7.6" fill="none" stroke="#6e6e6e" stroke-width="0.8"/><path d="M0.6 6.6 L2.8 4 L4.4 5.6 L6 4.4 L8.2 6.6" fill="none" stroke="#6e6e6e" stroke-width="0.7"/><circle cx="5.8" cy="2.4" r="0.7" fill="#6e6e6e"/></svg>
<svg style="left:685.5px;top:146.5px" width="8" height="10" viewBox="0 0 8 10"><rect x="0.4" y="0.4" width="7" height="9" rx="0.5" fill="none" stroke="#6e6e6e" stroke-width="0.8"/><path d="M0.4 2.4 H7.4 M0.4 7.4 H7.4" stroke="#6e6e6e" stroke-width="0.7"/><rect x="0.8" y="7.6" width="6.2" height="1.6" fill="#6e6e6e"/></svg>
<svg style="left:684.5px;top:167.5px" width="10" height="10" viewBox="0 0 10 10"><rect x="0.4" y="0.4" width="5.6" height="5.6" fill="none" stroke="#6e6e6e" stroke-width="0.8"/><circle cx="6.2" cy="6.2" r="3" fill="#404040" stroke="#6e6e6e" stroke-width="0.8"/></svg>
<svg style="left:684.5px;top:189px" width="10" height="9" viewBox="0 0 10 9"><path d="M0.5 8.5 V5.5 H2.7 V8.5Z M3.7 8.5 V3.2 H5.9 V8.5Z M6.9 8.5 V0.5 H9.1 V8.5Z" fill="none" stroke="#6e6e6e" stroke-width="0.8"/></svg>
<svg style="left:685px;top:210px" width="9" height="10" viewBox="0 0 9 10"><path d="M0.6 0.6 H6.6 M3.6 0.6 V5.6 M4.6 2.4 H7.6 M6.1 2.4 V6 M0.6 9.4 Q4.4 5.4 8.2 9.4" fill="none" stroke="#6e6e6e" stroke-width="0.8"/></svg>
<svg style="left:684.5px;top:232.5px" width="10" height="7.5" viewBox="0 0 10 7.5"><rect x="0.4" y="0.4" width="9" height="6.4" fill="none" stroke="#6e6e6e" stroke-width="0.8"/><path d="M0.6 0.8 L4.9 4 L9.2 0.8 M0.6 6.6 L3.4 3.2 M9.2 6.6 L6.4 3.2" fill="none" stroke="#6e6e6e" stroke-width="0.7"/></svg>
<!-- status -->
<div class="t" style="left:22.3px;top:391.5px;font-size:6.2px;font-weight:bold;color:#e9e9e9">Page 1 of 1</div>
<div class="t" style="left:420.6px;top:391.5px;font-size:6.2px;font-weight:bold;color:#e9e9e9">English (United States)</div>
<svg style="left:491.5px;top:392.5px" width="4" height="3" viewBox="0 0 4 3"><path d="M0.3 2.3 L2 0.6 L3.7 2.3" fill="none" stroke="#9a9a9a" stroke-width="0.7"/></svg>
<svg style="left:502px;top:389px" width="9.5" height="9.5" viewBox="0 0 9.5 9.5"><circle cx="4.7" cy="4.7" r="4.1" fill="none" stroke="#d6d6d6" stroke-width="0.8"/><ellipse cx="4.7" cy="4.7" rx="1.9" ry="4.1" fill="none" stroke="#d6d6d6" stroke-width="0.7"/><path d="M0.8 3.2 H8.6 M0.8 6.2 H8.6" stroke="#d6d6d6" stroke-width="0.7"/></svg>
<div class="t" style="left:520.2px;top:389.6px;font-size:5px;font-weight:bold;color:#d6d6d6;letter-spacing:-0.25px">abc</div>
<svg style="left:524px;top:394.2px" width="5.4" height="3.4" viewBox="0 0 5.4 3.4"><path d="M0.4 1.2 L1.9 2.8 L5 0.3" fill="none" stroke="#d6d6d6" stroke-width="0.8"/></svg>
<div class="a" style="left:537px;top:389.5px;width:1px;height:9px;background:#484848"></div>
<svg style="left:542px;top:389px" width="9.5" height="9.5" viewBox="0 0 9.5 9.5"><path d="M5 0.8 H0.6 V8.8 H7.4 V5" fill="none" stroke="#d6d6d6" stroke-width="0.8"/><path d="M7.4 0.6 L8.8 2 L4.2 6.6 L2.6 7 L3 5.4Z" fill="none" stroke="#d6d6d6" stroke-width="0.7" stroke-linejoin="round"/></svg>
<svg style="left:553px;top:393px" width="4" height="3" viewBox="0 0 4 3"><path d="M0.3 0.5 L2 2.2 L3.7 0.5" fill="none" stroke="#c8c8c8" stroke-width="0.8"/></svg>
<div class="a" style="left:562.5px;top:389.5px;width:1px;height:9px;background:#484848"></div>
<svg style="left:571px;top:389px" width="9.5" height="9.5" viewBox="0 0 9.5 9.5"><rect x="0.5" y="0.5" width="8.4" height="8.4" fill="none" stroke="#d6d6d6" stroke-width="0.8"/><path d="M2.2 3.8 V2.2 H3.8 M5.6 2.2 H7.2 V3.8 M7.2 5.6 V7.2 H5.6 M3.8 7.2 H2.2 V5.6 M2.4 2.4 L7 7 M7 2.4 L2.4 7" fill="none" stroke="#d6d6d6" stroke-width="0.7"/></svg>
<svg style="left:587.5px;top:390px" width="11.5" height="8" viewBox="0 0 11.5 8"><path d="M0.5 0.4 V7.2 M10.8 0.4 V7.2 M2 3.8 H9.4 M3.6 2.2 L2 3.8 L3.6 5.4 M7.8 2.2 L9.4 3.8 L7.8 5.4" fill="none" stroke="#d6d6d6" stroke-width="0.8"/></svg>
<div class="a" style="left:609.2px;top:393.4px;width:5.6px;height:0.8px;background:#c4c4c4"></div>
<div class="t" style="left:624px;top:391.5px;font-size:6.2px;font-weight:bold;color:#e9e9e9">Zoom 100%</div>
<div class="a" style="left:668.2px;top:393.4px;width:6.6px;height:0.8px;background:#c8c8c8"></div><div class="a" style="left:671.1px;top:390.5px;width:0.8px;height:6.6px;background:#c8c8c8"></div>
<div class="a" id="page">
<div class="a" style="left:0;top:0;width:450px;height:5px;background:#b4c6e4"></div>
<div class="a" style="left:0;top:73px;width:190px;height:230px;background:#fef8f5"></div>
<div class="a" style="left:86px;top:72.19999999999999px;width:400px;height:1px;background:#d3dff0"></div>
<svg style="left:0;top:0" width="450" height="292"><polygon points="81.5,14.0 74.3,26.5 59.9,26.5 52.7,14.0 59.9,1.5 74.3,1.5" fill="#d9767c" fill-opacity="0.3"/><polygon points="75.3,26.5 68.1,39.0 53.7,39.0 46.5,26.5 53.7,14.0 68.1,14.0" fill="#9b8fc4" fill-opacity="0.3"/><polygon points="81.5,38.9 74.3,51.4 59.9,51.4 52.7,38.9 59.9,26.4 74.3,26.4" fill="#6b7f99" fill-opacity="0.3"/><polygon points="98.0,39.0 90.8,51.5 76.4,51.5 69.2,39.0 76.4,26.5 90.8,26.5" fill="#a9c784" fill-opacity="0.3"/><polygon points="104.4,51.6 97.2,64.1 82.8,64.1 75.6,51.6 82.8,39.1 97.2,39.1" fill="#f5b47a" fill-opacity="0.3"/><polygon points="98.1,64.0 90.9,76.5 76.5,76.5 69.3,64.0 76.5,51.5 90.9,51.5" fill="#6b7f99" fill-opacity="0.3"/><polygon points="75.3,51.5 68.1,64.0 53.7,64.0 46.5,51.5 53.7,39.0 68.1,39.0" fill="#a9c784" fill-opacity="0.3"/><polygon points="81.5,64.2 74.3,76.7 59.9,76.7 52.7,64.2 59.9,51.7 74.3,51.7" fill="#7f9fc6" fill-opacity="0.3"/><polygon points="75.7,76.7 68.5,89.2 54.1,89.2 46.9,76.7 54.1,64.2 68.5,64.2" fill="#6b7f99" fill-opacity="0.3"/><polygon points="30.2,52.0 23.0,64.5 8.6,64.5 1.4,52.0 8.6,39.5 23.0,39.5" fill="#d9767c" fill-opacity="0.3"/><polygon points="36.0,64.4 28.8,76.9 14.4,76.9 7.2,64.4 14.4,51.9 28.8,51.9" fill="#8a7078" fill-opacity="0.3"/><polygon points="52.7,64.4 45.5,76.9 31.1,76.9 23.9,64.4 31.1,51.9 45.5,51.9" fill="#9b8fc4" fill-opacity="0.3"/><polygon points="30.2,76.7 23.0,89.2 8.6,89.2 1.4,76.7 8.6,64.2 23.0,64.2" fill="#a9c784" fill-opacity="0.3"/><polygon points="59.0,76.7 51.8,89.2 37.4,89.2 30.2,76.7 37.4,64.2 51.8,64.2" fill="#7f9fc6" fill-opacity="0.3"/><polygon points="36.0,89.0 28.8,101.5 14.4,101.5 7.2,89.0 14.4,76.5 28.8,76.5" fill="#a9c784" fill-opacity="0.3"/><polygon points="52.6,89.0 45.4,101.5 31.0,101.5 23.8,89.0 31.0,76.5 45.4,76.5" fill="#7f9fc6" fill-opacity="0.3"/><polygon points="30.2,101.7 23.0,114.2 8.6,114.2 1.4,101.7 8.6,89.2 23.0,89.2" fill="#f5b47a" fill-opacity="0.3"/></svg>
<div class="a" style="left:121px;top:27.299999999999997px;width:306.4px;height:43.39999999999999px;border:0.8px dotted #d2dbeb"></div>
<div class="a" style="left:220.5px;top:27.299999999999997px;width:0;height:43.39999999999999px;border-left:0.8px dotted #d2dbeb"></div>
<div class="a" style="left:297px;top:27.299999999999997px;width:0;height:43.39999999999999px;border-left:0.8px dotted #d2dbeb"></div>
<div class="a" style="left:359.4px;top:27.299999999999997px;width:0;height:43.39999999999999px;border-left:0.8px dotted #d2dbeb"></div>
<div class="a" style="left:220.5px;top:36.599999999999994px;width:206.89999999999998px;height:1px;background:#b9cbe3"></div>
<div class="t" style="left:125.5px;top:28.9px;font-size:15.8px;letter-spacing:0.45px;font-weight:bold;color:#f2b488">YOUR</div>
<div class="t" style="left:125.6px;top:46.8px;font-size:11.1px;letter-spacing:0.25px;font-weight:bold;color:#f2b488">COMPANY</div>
<div class="t" style="left:224.6px;top:27.6px;font-size:6.6px;font-weight:bold;color:#f3b07e">ADDRESS</div>
<div class="t" style="left:306.6px;top:27.6px;font-size:6.6px;font-weight:bold;color:#f3b07e">PHONE</div>
<div class="t" style="left:368.9px;top:27.6px;font-size:6.6px;font-weight:bold;color:#f3b07e">WEB</div>
<div class="t" style="left:224.6px;top:37.6px;font-size:7.35px;color:#a6a6a6">Building, Street,</div>
<div class="t" style="left:224.6px;top:45.7px;font-size:7.35px;color:#a6a6a6">City, Country</div>
<div class="t" style="left:306.6px;top:37.6px;font-size:7.35px;color:#a6a6a6;letter-spacing:-0.38px">+123 456 789</div>
<div class="t" style="left:368.9px;top:37.6px;font-size:7.35px;color:#a6a6a6">you@mail.com</div>
<div class="t" style="left:368.9px;top:45.7px;font-size:7.35px;color:#a6a6a6">yourweb.com</div>
<div class="t" style="right:33.1px;top:90.8px;font-size:17px;color:#e36c0a">An eye-catching heading means a lot</div>
<div class="t" style="right:33.1px;top:118.2px;font-size:9.48px;font-weight:bold;color:#9bbb59">AN INFORMATIVE SUBHEADING ALSO DOES</div>
<div class="t" style="right:33.1px;top:139.30px;font-size:8.81px;color:#1f3864;line-height:9.8px">A perfect document always starts with a perfect heading. <span style="background:#fce8c4">Although nothing on earth</span></div>
<div class="t" style="right:33.1px;top:152.80px;font-size:8.81px;color:#1f3864;line-height:9.8px"><span style="background:#fce8c4">is perfect, any document is expected to be as close to perfection as possible.</span> Choosing an</div>
<div class="t" style="right:33.1px;top:166.90px;font-size:8.81px;color:#1f3864;line-height:9.8px">ideal heading is the first step when trying to draw up a well-structured and pleasant-looking</div>
<div class="t" style="right:33.1px;top:182.10px;font-size:8.81px;color:#1f3864;line-height:9.8px">document. What else <span style="color:#2e9a30;text-decoration:line-through">should be taken into consideration</span><span style="color:#2e9a30;text-decoration:underline"> is important</span>?</div>
<svg style="left:0;top:0" width="450" height="292"><circle cx="40.8" cy="164.3" r="15.2" fill="none" stroke="#86a252" stroke-width="1.05"/><ellipse cx="40.8" cy="164.3" rx="5.4" ry="15.2" fill="none" stroke="#86a252" stroke-width="0.9"/><path d="M40.8 149.1 V179.5 M25.6 163.7 H56.0" stroke="#86a252" stroke-width="0.9"/><path d="M29.2 154.7 Q40.8 160.9 52.4 154.7" fill="none" stroke="#86a252" stroke-width="0.9"/><path d="M24.5 181.3 V178.8 Q24.5 175.4 27.9 175.4 H32.0 Q35.4 175.4 35.4 178.8 V181.3 Z" fill="#fef8f5" stroke="#86a252" stroke-width="1" stroke-linejoin="round"/><circle cx="30.8" cy="171.9" r="3.1" fill="#fef8f5" stroke="#86a252" stroke-width="1"/><path d="M46.6 181.3 V178.8 Q46.6 175.4 50.0 175.4 H54.1 Q57.5 175.4 57.5 178.8 V181.3 Z" fill="#fef8f5" stroke="#86a252" stroke-width="1" stroke-linejoin="round"/><circle cx="51.2" cy="171.9" r="3.1" fill="#fef8f5" stroke="#86a252" stroke-width="1"/><path d="M34.0 182.5 V179.2 Q34.0 175.8 37.4 175.8 H44.4 Q47.8 175.8 47.8 179.2 V182.5 Z" fill="#fef8f5" stroke="#86a252" stroke-width="1" stroke-linejoin="round"/><circle cx="40.8" cy="171.2" r="3.9" fill="#fef8f5" stroke="#86a252" stroke-width="1"/></svg>
<div class="a" style="left:23.599999999999994px;top:201.2px;width:15.4px;height:15.2px;background:#e06c12"></div>
<div class="t" style="left:28.90px;top:204.60px;font-size:8.6px;font-weight:bold;color:#fff">1</div>
<div class="t" style="left:49.00px;top:204.30px;font-size:9.3px;font-weight:bold;color:#e2701c;letter-spacing:0.05px">ADDING TABLES</div>
<div class="a" style="left:49px;top:220.5px;width:122.3px;font-size:8.4px;letter-spacing:-0.15px;color:#e3701e"><div style="height:10.85px;line-height:10.85px;white-space:nowrap;text-align:justify;text-align-last:justify">A document consisting of infinite</div><div style="height:10.85px;line-height:10.85px;white-space:nowrap;text-align:justify;text-align-last:justify">text lines will definitely make the</div><div style="height:10.85px;line-height:10.85px;white-space:nowrap;text-align:justify;text-align-last:justify">readers bored. That's why</div><div style="height:10.85px;line-height:10.85px;white-space:nowrap;text-align:justify;text-align-last:justify"><span style="text-decoration:line-through;color:#e8955c">inserting</span> adding tables can help</div><div style="height:10.85px;line-height:10.85px;white-space:nowrap;text-align:justify;text-align-last:justify">to provide a better visual grouping</div><div style="height:10.85px;line-height:10.85px;white-space:nowrap;text-align:justify;text-align-last:left">of information.</div></div>
<div class="t" style="left:288.00px;top:202.10px;font-size:9.4px;font-weight:bold;color:#9bbb59">YOUR TABLE</div>
<div class="a" style="left:263px;top:241.60px;width:154px;height:14.15px;background:#d6daec"></div>
<div class="a" style="left:263px;top:255.75px;width:154px;height:14.25px;background:#fef0cd"></div>
<div class="a" style="left:263px;top:270.00px;width:154px;height:14.90px;background:#e4f0d5"></div>
<div class="a" style="left:263px;top:284.90px;width:154px;height:15.10px;background:#f6cdcd"></div>
<div class="a" style="left:263px;top:241.00px;width:154px;height:0;border-top:0.7px dotted #c3cfe8"></div>
<div class="a" style="left:263px;top:255.35px;width:154px;height:0;border-top:0.7px dotted #c3cfe8"></div>
<div class="a" style="left:263px;top:269.60px;width:154px;height:0;border-top:0.7px dotted #c3cfe8"></div>
<div class="a" style="left:263px;top:284.50px;width:154px;height:0;border-top:0.7px dotted #c3cfe8"></div>
<div class="a" style="left:262.60px;top:218.75px;width:0;height:81.25px;border-left:0.7px dotted #c3cfe8"></div>
<div class="a" style="left:334.35px;top:241.40px;width:0;height:58.60000000000002px;border-left:0.7px dotted #c3cfe8"></div>
<div class="a" style="left:377.60px;top:241.40px;width:0;height:58.60000000000002px;border-left:0.7px dotted #c3cfe8"></div>
<div class="a" style="left:210.7px;top:218.39999999999998px;width:206.8px;height:90px;border:0.8px solid #f2a064;border-bottom:none"></div>
<div class="a" style="left:210.7px;top:240.89999999999998px;width:52.30000000000001px;height:0.8px;background:#f2a064"></div>
<div class="a" style="left:263px;top:240.89999999999998px;width:154px;height:0.8px;background:#f2a064;opacity:0.45"></div>
<svg style="left:256.5px;top:234.60000000000002px" width="6.4" height="6.4" viewBox="0 0 6.4 6.4"><rect x="0.3" y="0.3" width="5.8" height="5.8" fill="#f4f4f4" stroke="#8c8c8c" stroke-width="0.6"/><path d="M3.2 1.2 V5.2 M1.2 3.2 H5.2" stroke="#555" stroke-width="0.7"/></svg>
<div class="t" style="left:306.40px;top:225.75px;font-size:8.68px;font-weight:bold;color:#e2701c;-webkit-text-stroke:0.15px #e2701c">Text description</div>
<div class="t" style="left:238.60000000000002px;top:270px;width:0;height:0"><div style="position:absolute;left:-40px;top:-12px;width:80px;height:24px;transform:rotate(-90deg);text-align:center;font-size:8.8px;font-weight:bold;color:#e2701c;-webkit-text-stroke:0.2px #e2701c;line-height:12px">Text<br>description</div></div>
<div class="t" style="left:273.00px;top:246.35px;font-size:7.27px;color:#111">Parameter 1</div>
<div class="t" style="left:335.4px;top:246.35px;width:40px;text-align:center;font-size:7.27px;color:#111">45</div>
<div class="t" style="left:381.9px;top:246.35px;width:40px;text-align:center;font-size:7.27px;color:#111">5</div>
<div class="t" style="left:273.00px;top:259.60px;font-size:7.27px;color:#111">Parameter 2</div>
<div class="t" style="left:335.4px;top:259.60px;width:40px;text-align:center;font-size:7.27px;color:#111">70</div>
<div class="t" style="left:381.9px;top:259.60px;width:40px;text-align:center;font-size:7.27px;color:#111">10</div>
<div class="t" style="left:273.00px;top:274.60px;font-size:7.27px;color:#111">Parameter 3</div>
<div class="t" style="left:335.4px;top:274.60px;width:40px;text-align:center;font-size:7.27px;color:#111"><span style="color:#1f9c9a;text-decoration:underline">15</span><span style="color:#1f9c9a;text-decoration:line-through">6</span></div>
<div class="t" style="left:381.9px;top:274.60px;width:40px;text-align:center;font-size:7.27px;color:#111">5</div>
<div class="t" style="left:273.00px;top:289.45px;font-size:7.27px;color:#111">Parameter 4</div>
<div class="t" style="left:335.4px;top:289.45px;width:40px;text-align:center;font-size:7.27px;color:#111">35</div>
<div class="t" style="left:381.9px;top:289.45px;width:40px;text-align:center;font-size:7.27px;color:#111">5</div>
<!--PAGE3-->
</div>
</body>
</html>
